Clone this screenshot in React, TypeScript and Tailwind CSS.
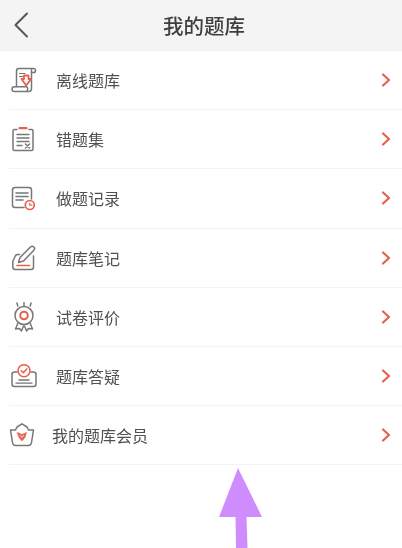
const G = "#777777";
const R = "#e8604c";

const icons = [
  <svg key="0" width="26" height="26" viewBox="0 0 26 26" fill="none" stroke={G} strokeWidth="1.500" strokeLinecap="round" strokeLinejoin="round">
    <path d="M5.500 19.500V4C5.500 2.500 6.500 1.500 8 1.500H22.500C24 1.500 24.500 2.700 24.500 3.700C24.500 4.800 23.700 5.500 22.500 5.500H20.500" />
    <path d="M20.500 2.500V21.500C20.500 23.500 19.500 24.500 18 24.500H3.500C2 24.500 1 23.500 1 22.200C1 20.800 2 19.800 3.500 19.800H15C16 19.800 16.700 20.700 16.700 22C16.700 23 16.300 24 15.500 24.500" />
    <path d="M8.500 6.500H14M8.500 9.500H12" strokeWidth="1.200" />
    <path d="M10.500 12H13V8.500H17.500V12H20L15.200 18.500Z" fill="#fff" stroke={R} strokeWidth="1.800" />
  </svg>,
  <svg key="1" width="26" height="26" viewBox="0 0 26 26" fill="none" stroke={G} strokeWidth="1.500" strokeLinecap="round" strokeLinejoin="round">
    <path d="M6 3.500H3.500C2.500 3.500 2 4 2 5V23C2 24 2.500 24.500 3.500 24.500H20.500C21.500 24.500 22 24 22 23V5C22 4 21.500 3.500 20.500 3.500H18" />
    <path d="M8.500 2.200H15.500" stroke={R} strokeWidth="2.200" />
    <path d="M6 8.500H18M6 12H18M6 15.500H18M6 19.500H11" strokeWidth="1.300" />
    <path d="M14.500 18L18.500 22M18.500 18L14.500 22" />
  </svg>,
  <svg key="2" width="26" height="26" viewBox="0 0 26 26" fill="none" stroke={G} strokeWidth="1.500" strokeLinecap="round" strokeLinejoin="round">
    <path d="M13 22.500H4C2.500 22.500 1.500 21.500 1.500 20V5C1.500 3.500 2.500 2.500 4 2.500H18C19.500 2.500 20.500 3.500 20.500 5V14" />
    <path d="M5 8H17M5 11.500H17M5 15H12" />
    <circle cx="18.800" cy="20" r="4.500" fill="#fff" stroke={R} strokeWidth="1.700" />
    <path d="M18.800 18V20.200H20.800" stroke={R} strokeWidth="1.200" />
  </svg>,
  <svg key="3" width="26" height="26" viewBox="0 0 26 26" fill="none" stroke={G} strokeWidth="1.500" strokeLinecap="round" strokeLinejoin="round">
    <path d="M8.500 9.500H6.500C5 9.500 4.500 10.200 4 11.500L1.800 16.500V22C1.800 23.500 2.800 24.500 4.300 24.500H20C21.500 24.500 22.500 23.500 22.500 22V11" />
    <path d="M7.500 17.500L9 12.500L19.500 2C20.500 1 21.800 1 22.800 2C23.800 3 23.800 4.200 22.800 5.200L12.500 16Z" />
    <path d="M6 20.500H18.500" stroke={R} strokeWidth="1.600" />
  </svg>,
  <svg key="4" width="26" height="30" viewBox="0 0 26 30" fill="none" stroke={G} strokeWidth="1.500" strokeLinecap="round" strokeLinejoin="round">
    <path d="M6 1L6.800 4M13 0.500V3.500M20 1L19.200 4" />
    <circle cx="13" cy="13.500" r="9" />
    <circle cx="13" cy="13.500" r="3.800" stroke={R} strokeWidth="2" />
    <path d="M7 21L4.500 27L8.500 26.500L10.500 29L12.500 24M19 21L21.500 27L17.500 26.500L15.500 29L13.500 24" />
  </svg>,
  <svg key="5" width="26" height="26" viewBox="0 0 26 26" fill="none" stroke={G} strokeWidth="1.500" strokeLinecap="round" strokeLinejoin="round">
    <path d="M6 9H3.500C2 9 1 10 1 11.500V21C1 22.500 2 23.500 3.500 23.500H22.500C24 23.500 25 22.500 25 21V11.500C25 10 24 9 22.500 9H20" />
    <circle cx="13" cy="7.800" r="6" fill="#fff" stroke={R} strokeWidth="1.600" />
    <path d="M10.300 7.800L12.300 9.800L15.800 6" stroke={R} strokeWidth="1.600" />
    <path d="M8 17H18" strokeWidth="1.500" />
    <path d="M5 20.200H21" strokeWidth="1.300" />
  </svg>,
  <svg key="6" width="26" height="26" viewBox="0 0 26 26" fill="none" stroke={G} strokeWidth="1.500" strokeLinecap="round" strokeLinejoin="round">
    <path d="M1.500 8H6.500L8 5L13 1.800L18 5L19.500 8H24.500L22.500 20.500C22.200 22.300 21 23.500 19.500 23.500H6.500C5 23.500 3.800 22.300 3.500 20.500Z" />
    <path d="M8.500 10.500L13 12.500L17.500 10.500L16 15.500L13 19L10 15.500Z" fill={R} stroke={R} strokeWidth="0.600" />
    <path d="M11.500 13.500L13 15.500L14.500 13.500" stroke="#fff" strokeWidth="0.800" />
  </svg>,
];

const rows = [
  { t: "离线题库" },
  { t: "错题集" },
  { t: "做题记录" },
  { t: "题库笔记" },
  { t: "试卷评价" },
  { t: "题库答疑" },
  { t: "我的题库会员", member: true },
];

export default function App() {
  return (
    <div
      className="relative h-[548px] w-[402px] overflow-hidden bg-white blur-[0.4px]"
      style={{ fontFamily: '"Noto Sans CJK SC", sans-serif' }}
    >
      <header className="relative flex h-[51px] items-center justify-center bg-[#f4f4f4] pb-[1px] pl-[6px]">
        <svg className="absolute left-[13px] top-[12px]" width="16" height="26" viewBox="0 0 16 26" fill="none" stroke="#555" strokeWidth="2" strokeLinecap="round" strokeLinejoin="round">
          <path d="M14 1.500L2.500 13L14 24.500" />
        </svg>
        <h1 className="text-[20.500px] font-medium text-[#3f3f3f]">我的题库</h1>
      </header>
      <ul className="pl-[9px]">
        {rows.map((r, i) => (
          <li key={r.t} className="flex h-[59.200px] items-center border-b border-[#f3f3f3] pr-[11px]">
            <span className={r.member ? "flex w-[26px] justify-center" : "ml-[2px] flex w-[26px] justify-center"}>{icons[i]}</span>
            <span className={r.member ? "ml-[17px] text-[16px] text-[#505050]" : "ml-[19px] text-[16px] text-[#505050]"}>{r.t}</span>
            <svg className="ml-auto" width="10" height="14" viewBox="0 0 10 14" fill="none" stroke={R} strokeWidth="2.200" strokeLinecap="round" strokeLinejoin="round">
              <path d="M2 1.500L8 7L2 12.500" />
            </svg>
          </li>
        ))}
      </ul>
      <svg className="absolute left-[218px] top-[467px]" width="46" height="81" viewBox="0 0 46 81" fill="#cf8cff">
        <path d="M20 1L1 50H17.500L18 81H29.500L28.500 50H44Z" />
      </svg>
    </div>
  );
}
